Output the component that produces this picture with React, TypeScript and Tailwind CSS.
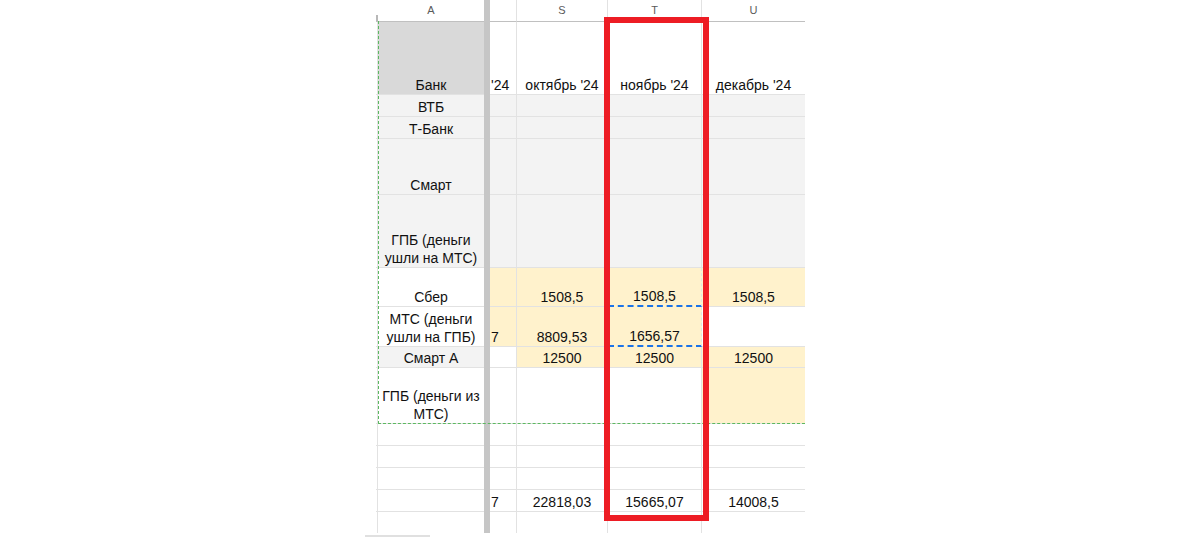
import React from "react";

type Cell = { text?: React.ReactNode; bg?: string; blue?: boolean; left?: boolean };

interface Row {
  h: number;
  a?: Cell;
  r?: Cell;
  s?: Cell;
  t?: Cell;
  u?: Cell;
  last?: boolean;
}

const GRAY = "bg-[#f3f3f3]";
const YEL = "bg-[#fff2cc]";

const rows: Row[] = [
  {
    h: 73,
    a: { text: "Банк", bg: "bg-[#d9d9d9]" },
    r: { text: "'24", left: true },
    s: { text: "октябрь '24" },
    t: { text: "ноябрь '24" },
    u: { text: "декабрь '24" },
  },
  { h: 22, a: { text: "ВТБ", bg: GRAY }, r: { bg: GRAY }, s: { bg: GRAY }, t: { bg: GRAY }, u: { bg: GRAY } },
  { h: 22, a: { text: "Т-Банк", bg: GRAY }, r: { bg: GRAY }, s: { bg: GRAY }, t: { bg: GRAY }, u: { bg: GRAY } },
  { h: 56, a: { text: "Смарт", bg: GRAY }, r: { bg: GRAY }, s: { bg: GRAY }, t: { bg: GRAY }, u: { bg: GRAY } },
  {
    h: 73,
    a: { text: <>ГПБ (деньги<br />ушли на МТС)</>, bg: GRAY },
    r: { bg: GRAY },
    s: { bg: GRAY },
    t: { bg: GRAY },
    u: { bg: GRAY },
  },
  {
    h: 39,
    a: { text: "Сбер" },
    r: { bg: YEL },
    s: { text: "1508,5", bg: YEL },
    t: { text: "1508,5", bg: YEL, blue: true },
    u: { text: "1508,5", bg: YEL },
  },
  {
    h: 40,
    a: { text: <>МТС (деньги<br />ушли на ГПБ)</> },
    r: { text: "7", bg: YEL, left: true },
    s: { text: "8809,53", bg: YEL },
    t: { text: "1656,57", bg: YEL, blue: true },
    u: {},
  },
  {
    h: 21,
    a: { text: "Смарт А", bg: GRAY },
    r: {},
    s: { text: "12500", bg: YEL },
    t: { text: "12500", bg: YEL },
    u: { text: "12500", bg: YEL },
  },
  { h: 56, a: { text: <>ГПБ (деньги из<br />МТС)</> }, u: { bg: YEL } },
  { h: 22 },
  { h: 22 },
  { h: 22 },
  {
    h: 22,
    r: { text: "7", left: true },
    s: { text: "22818,03" },
    t: { text: "15665,07" },
    u: { text: "14008,5" },
  },
  { h: 21, last: true },
];

function GridCell({ cell, last, right = true }: { cell?: Cell; last?: boolean; right?: boolean }) {
  const c = cell || {};
  const border = c.blue
    ? "border-b-2 border-dashed border-b-[#1a73e8]"
    : last
    ? ""
    : "border-b border-b-[#e2e2e2]";
  return (
    <div
      className={`flex items-end overflow-hidden whitespace-nowrap leading-[18px] ${
        c.left ? "justify-start pl-[1px]" : "justify-center text-center px-[2px]"
      } ${right ? "border-r border-r-[#e2e2e2]" : ""} ${border} ${c.bg || "bg-white"}`}
    >
      {c.text}
    </div>
  );
}

export default function App() {
  const cols = "grid grid-cols-[2px_106px_6px_27px_91px_94px_103px]";
  return (
    <div
      className="w-[1200px] h-[537px] overflow-hidden bg-white text-[14px] text-[#111]"
      style={{ fontFamily: '"Liberation Sans", Arial, sans-serif' }}
    >
      <div className="pl-[376px]">
        <div className="relative w-[429px]">
          {/* column letters */}
          <div className={`${cols} h-[22px] text-[11px] text-[#5a5a5a]`}>
            <div className="flex items-end border-b border-b-[#c0c0c0]">
              <div className="h-[6px] w-full bg-[#b8b8b8]" />
            </div>
            <div className="flex items-center justify-center border-b border-b-[#c0c0c0]">A</div>
            <div className="bg-[#c6c6c6]" />
            <div className="border-b border-r border-b-[#c0c0c0] border-r-[#e2e2e2]" />
            <div className="flex items-center justify-center border-b border-r border-b-[#c0c0c0] border-r-[#e2e2e2]">S</div>
            <div className="flex items-center justify-center border-b border-r border-b-[#c0c0c0] border-r-[#e2e2e2]">T</div>
            <div className="flex items-center justify-center border-b border-b-[#c0c0c0]">U</div>
          </div>

          {rows.map((row, i) => (
            <div key={i} className={cols} style={{ height: row.h }}>
              <div className={`bg-white border-r border-r-[#e2e2e2] ${row.last ? "" : "border-b border-b-[#e2e2e2]"}`} />
              <GridCell cell={row.a} last={row.last} right={false} />
              <div className="bg-[#c6c6c6]" />
              <GridCell cell={row.r} last={row.last} />
              <GridCell cell={row.s} last={row.last} />
              <GridCell cell={row.t} last={row.last} />
              <GridCell cell={row.u} last={row.last} right={false} />
            </div>
          ))}

          {/* copy marquee */}
          <div className="pointer-events-none absolute left-[2px] top-[21px] h-[403px] w-[427px] border-l border-b border-dashed border-[#5cb860]" />

          {/* red highlight */}
          <div className="pointer-events-none absolute left-[228px] top-[17px] h-[504px] w-[105px] border-[6px] border-[#ed1c24]" />
        </div>
      </div>
      <div className="h-[4px] pl-[365px]">
        <div className="mt-[2px] h-[2px] w-[65px] bg-[#e0e0e0]" />
      </div>
    </div>
  );
}
